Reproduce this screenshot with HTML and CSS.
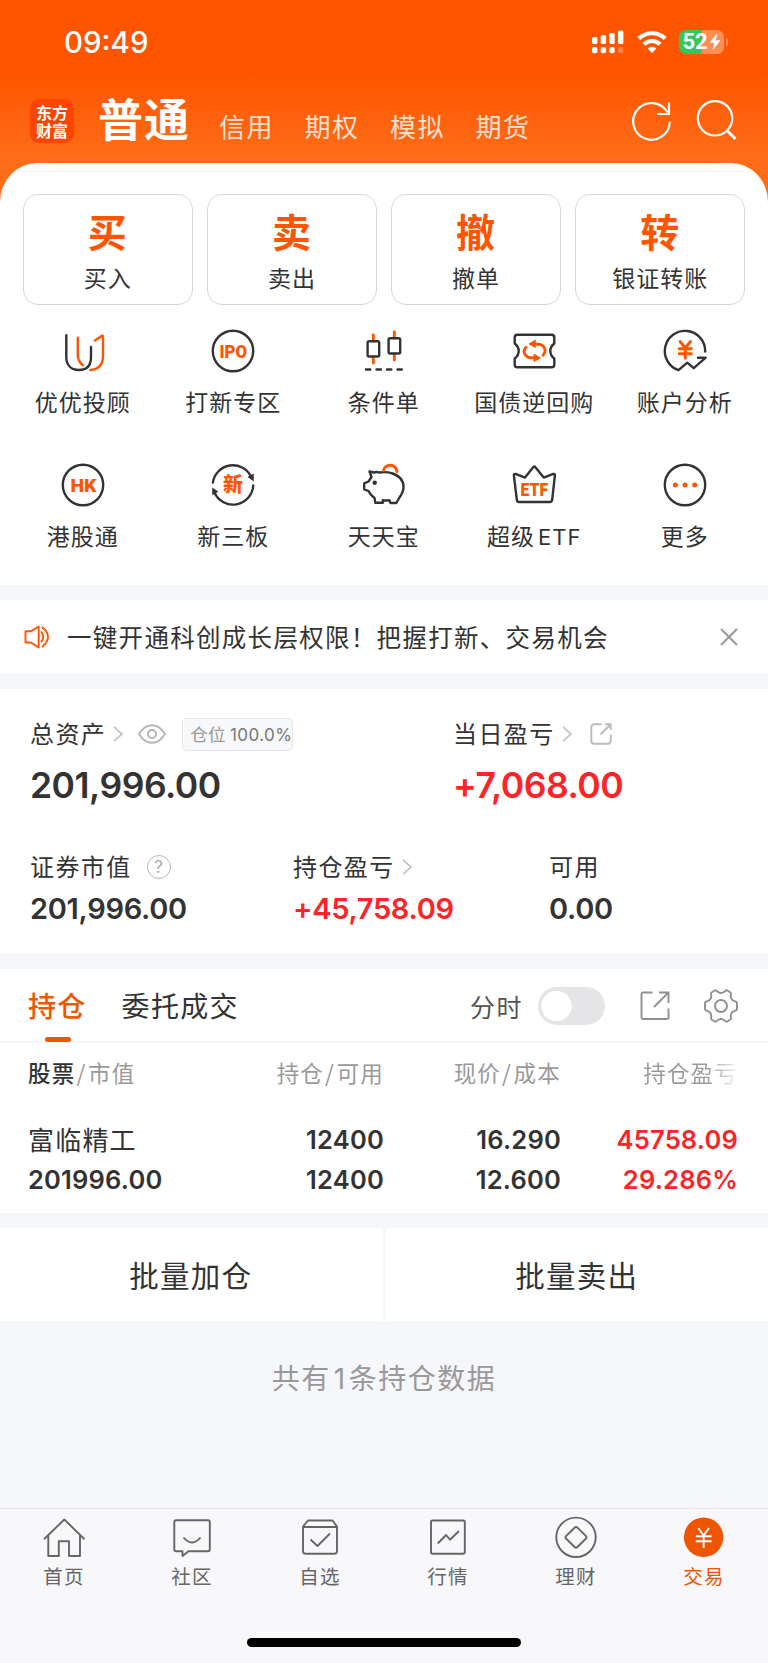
FILE: index.html
```html
<!DOCTYPE html>
<html lang="zh-CN">
<head>
<meta charset="utf-8">
<meta name="viewport" content="width=device-width, initial-scale=1">
<title>交易</title>
<link rel="stylesheet" href="styles.css">
</head>
<body>
<div class="app">
  <header class="hero">
    <div class="status">
      <span class="clock">09:49</span>
      <div class="status-icons">
        <svg class="signal" width="32" height="24" viewBox="0 0 32 24" fill="#fff">
          <rect x="0" y="7" width="5.4" height="7" rx="1.6"/><rect x="8.7" y="5" width="5.4" height="9" rx="1.6"/><rect x="17.3" y="3" width="5.4" height="11" rx="1.6"/><rect x="26" y="0.5" width="5.4" height="13.5" rx="1.6"/>
          <rect x="0" y="17" width="5.4" height="6.3" rx="1.8"/><rect x="8.7" y="17" width="5.4" height="6.3" rx="1.8"/><rect x="17.3" y="17" width="5.4" height="6.3" rx="1.8"/><rect x="26" y="17" width="5.4" height="6.3" rx="1.8" opacity=".25"/>
        </svg>
        <svg class="wifi" width="30" height="24" viewBox="0 0 30 24" fill="none" stroke="#fff" stroke-width="4.2">
          <path d="M1.8 8.6a19 19 0 0 1 26.4 0"/><path d="M6.9 14.3a11.6 11.6 0 0 1 16.2 0"/><path d="M15 23l-4.3-4.4a6.2 6.2 0 0 1 8.6 0z" fill="#fff" stroke="none"/>
        </svg>
        <div class="battery"><span>52</span><svg width="12" height="18" viewBox="0 0 12 18"><path d="M8.3 0L.6 9.7h4.6L3.6 17.4 11.5 7.3H6.9z" fill="#fff"/></svg></div>
        <i class="battery-tip"></i>
      </div>
    </div>
    <nav class="accounts">
      <div class="brand"><span>东方</span><span>财富</span></div>
      <b class="account-on">普通</b>
      <span class="account">信用</span><span class="account">期权</span><span class="account">模拟</span><span class="account">期货</span>
      <svg class="tool" width="44" height="44" viewBox="0 0 44 44" fill="none" stroke="#fff" stroke-width="2.2"><path d="M39.8 22.5A18.3 18.3 0 1 1 37.500 13.500"/><path d="M39 3.5V15H27"/></svg>
      <svg class="tool" width="44" height="44" viewBox="0 0 44 44" fill="none" stroke="#fff" stroke-width="2.2"><circle cx="20" cy="19.300" r="17.2"/><path d="M32 31.500l8.500 8.500" stroke-width="2.800"/></svg>
    </nav>
  </header>

  <main>
    <section class="sheet">
      <div class="cards">
        <div class="card"><b>买</b><span>买入</span></div>
        <div class="card"><b>卖</b><span>卖出</span></div>
        <div class="card"><b>撤</b><span>撤单</span></div>
        <div class="card"><b>转</b><span>银证转账</span></div>
      </div>
      <div class="grid">
        <div class="entry">
          <svg class="icon" viewBox="0 0 48 48"><path class="k" d="M7.3 8.3V30C7.3 38 12 43 20 43S32 38 32 30V20"/><path class="o" d="M18.8 10.7V28c0 5 1.600 7.500 5 10.300M36 13.500L43 8.800L44 9V29C44 38 39.500 42.300 31.300 43"/></svg>
          <span>优优投顾</span></div>
        <div class="entry">
          <svg class="icon" viewBox="0 0 48 48"><circle class="k" cx="24" cy="24" r="20.2"/><text class="glyph" x="10.500" y="30.500" font-size="18" textLength="27.500" lengthAdjust="spacingAndGlyphs">IPO</text></svg>
          <span>打新专区</span></div>
        <div class="entry">
          <svg class="icon" viewBox="0 0 48 48"><path class="o thick" d="M13.300 8V14M13.300 30V36M34.300 5V11M34.300 27V33"/><rect class="k" x="7.600" y="14.300" width="11.600" height="15.200" rx="1.500"/><rect class="k" x="28.600" y="11.300" width="11.600" height="15.200" rx="1.500"/><path class="k" d="M6 42.500h4.300M16.500 42.500h4.500M27 42.500h4.300M37.500 42.500h4.300"/></svg>
          <span>条件单</span></div>
        <div class="entry">
          <svg class="icon" viewBox="0 0 48 48"><path class="k" d="M7.300 7.700H41.700Q44.300 7.700 44.300 10.500V16.500Q40.300 19.500 40.300 24T44.300 31.500V37.500Q44.300 40.300 41.700 40.300H7.300Q4.700 40.300 4.700 37.500V31.500Q8.700 28.500 8.700 24T4.700 16.500V10.500Q4.700 7.700 7.300 7.700Z"/><path class="o thick" d="M25 17.200H27.500C35 17.200 37 24 33 28.300M16 20.300C11.500 25 16 30.800 21 30.800H24.500"/><path d="M19 16.900L25.300 13.300V20.500ZM30.300 30.900L24 27.200V34.600Z" fill="#ff5500" stroke="#ff5500" stroke-linejoin="round"/></svg>
          <span>国债逆回购</span></div>
        <div class="entry">
          <svg class="icon" viewBox="0 0 48 48"><path class="k" d="M44.200 24.500A20.200 20.200 0 1 0 17.500 43.200L26.300 35.700L32.700 41.200L44.700 30.700H37"/><path class="o thick" d="M19 14.500L24.300 21L29.500 14.500M24.300 21V31.200M18.200 21.800H30.400M18.200 26.700H30.400"/></svg>
          <span>账户分析</span></div>
        <div class="entry">
          <svg class="icon" viewBox="0 0 48 48"><circle class="k" cx="24" cy="24" r="20.2"/><text class="glyph" x="11.500" y="30.500" font-size="18.500" textLength="26" lengthAdjust="spacingAndGlyphs">HK</text></svg>
          <span>港股通</span></div>
        <div class="entry">
          <svg class="icon" viewBox="0 0 48 48"><path class="k" d="M3.900 21.500A20.200 20.200 0 0 1 42 15.500M44.200 24.500A20.200 20.200 0 0 1 5.500 31.500"/><path d="M40 16L44 13.700V19ZM8 30.700L4 33V28Z" fill="#333" stroke="#333" stroke-width="1.500"/><text class="glyph cn" x="14" y="31" font-size="20">新</text></svg>
          <span>新三板</span></div>
        <div class="entry">
          <svg class="icon" viewBox="0 0 48 48"><path class="k" d="M9.500 10.500L14 11.500Q17 10.500 19 11.500Q27 10.500 31 12Q43.500 15.500 43.500 26Q43.500 31 39.500 36.500L36.300 42H30.500L29.500 39.300Q26 39.700 22.800 39.300V41.700H15.300L14.500 37Q10 33.500 8.500 30L4.200 28.300V22.300L8.500 20.500L11.500 16Z"/><circle cx="14.700" cy="21.700" r="2.200" fill="#333"/><path class="o thick" d="M23.500 9.500C25 2.500 35.500 2 37 10.500"/></svg>
          <span>天天宝</span></div>
        <div class="entry">
          <svg class="icon" viewBox="0 0 48 48"><path class="k" d="M15 16.600L23.200 6.200Q24.300 4.800 25.400 6.200L33.700 16.600L43.300 12.900Q45.100 12.700 44.900 14.500L42.200 38.600Q41.900 41 39.700 41H9Q7 41 6.800 38.600L3.900 14.500Q3.700 12.700 5.500 12.900Z"/><text class="glyph" x="10.500" y="34.800" font-size="19" textLength="27.500" lengthAdjust="spacingAndGlyphs">ETF</text></svg>
          <span class="mixed">超级<em>ETF</em></span></div>
        <div class="entry">
          <svg class="icon" viewBox="0 0 48 48"><circle class="k" cx="24" cy="24" r="20.2"/><g fill="#ff5500"><circle cx="14.300" cy="24" r="2.500"/><circle cx="24" cy="24" r="2.500"/><circle cx="33.700" cy="24" r="2.500"/></g></svg>
          <span>更多</span></div>
      </div>
    </section>

    <section class="notice">
      <svg width="28" height="28" viewBox="0 0 28 28" fill="none" stroke="#ff5500" stroke-width="1.900" stroke-linejoin="round"><path d="M2.500 8.300H8L15.700 3.500V24.500L8 19.500H2.500Z"/><path d="M18 8.500Q22.500 13.800 18 19.200M19 4Q31 13.800 19 24"/></svg>
      <p>一键开通科创成长层权限！把握打新、交易机会</p>
      <svg class="close" width="18" height="18" viewBox="0 0 18 18" stroke="#999" stroke-width="2"><path d="M1 1L17 17M17 1L1 17"/></svg>
    </section>

    <section class="assets">
      <div class="row top">
        <div class="stat">
          <div class="label"><span>总资产</span><svg class="chev" viewBox="0 0 10 16"><path d="M1 .8L9 8L1 15.200"/></svg>
            <svg class="eye" width="28" height="20" viewBox="0 0 28 20" fill="none" stroke="#b5b5b5" stroke-width="1.900"><path d="M1 10Q6.500 1.200 14 1.200T27 10Q21.500 18.800 14 18.800T1 10Z"/><circle cx="14" cy="10" r="4"/></svg>
            <span class="badge"><em>仓位</em>100.0%</span></div>
          <div class="num big">201,996.00</div>
        </div>
        <div class="stat">
          <div class="label"><span>当日盈亏</span><svg class="chev" viewBox="0 0 10 16"><path d="M1 .8L9 8L1 15.200"/></svg>
            <svg class="share" width="22" height="22" viewBox="0 0 22 22" fill="none" stroke="#bbb" stroke-width="1.900"><path d="M11.500 1.300H4.300Q1.300 1.300 1.300 4.300V17.700Q1.300 20.700 4.300 20.700H17.700Q20.700 20.700 20.700 17.700V11.500M15 1.300H20.700V7M20.500 1.500L10.500 11.500"/></svg></div>
          <div class="num big up">+7,068.00</div>
        </div>
      </div>
      <div class="row bottom">
        <div class="stat">
          <div class="label"><span>证券市值</span><i class="help">?</i></div>
          <div class="num">201,996.00</div>
        </div>
        <div class="stat">
          <div class="label"><span>持仓盈亏</span><svg class="chev" viewBox="0 0 10 16"><path d="M1 .8L9 8L1 15.200"/></svg></div>
          <div class="num up">+45,758.09</div>
        </div>
        <div class="stat">
          <div class="label"><span>可用</span></div>
          <div class="num">0.00</div>
        </div>
      </div>
    </section>

    <section class="holdings">
      <div class="tabs">
        <span class="tab on">持仓</span><span class="tab">委托成交</span>
        <span class="mode">分时</span><i class="toggle"></i>
        <svg class="export" width="30" height="30" viewBox="0 0 30 30" fill="none" stroke="#8f8f8f" stroke-width="1.900"><path d="M12.500 1.500H3Q1.500 1.500 1.500 3V26.500Q1.500 28 3 28H27Q28.500 28 28.500 26.500V17.500M19 1.500H28.500V12M28.300 1.700L14 16"/></svg>
        <svg class="gear" width="36" height="36" viewBox="0 0 36 36" fill="none" stroke="#8f8f8f" stroke-width="1.900"><path d="M12.200 2.300Q13.300 2.200 14.300 3.500Q18 6.500 21.700 3.500Q22.700 2.200 23.800 2.300L27.500 4.500Q28.300 5.500 27.700 7Q27.500 12 31.700 13.200Q33.700 13.500 34 14.700V21.300Q33.700 22.500 31.700 22.800Q27.500 24 27.700 29Q28.300 30.500 27.500 31.500L23.800 33.700Q22.700 33.800 21.700 32.500Q18 29.500 14.300 32.500Q13.300 33.800 12.200 33.700L8.500 31.500Q7.700 30.500 8.300 29Q8.500 24 4.300 22.800Q2.300 22.500 2 21.300V14.700Q2.300 13.500 4.300 13.200Q8.500 12 8.300 7Q7.700 5.500 8.500 4.500Z" stroke-linejoin="round"/><circle cx="18" cy="18" r="6"/></svg>
      </div>
      <div class="cols head"><span><b>股票</b><u>/</u>市值</span><span>持仓<u>/</u>可用</span><span>现价<u>/</u>成本</span><span class="fade">持仓盈亏</span></div>
      <div class="cols line name"><span class="stock">富临精工</span><span>12400</span><span>16.290</span><span class="up">45758.09</span></div>
      <div class="cols line"><span>201996.00</span><span>12400</span><span>12.600</span><span class="up">29.286%</span></div>
    </section>

    <section class="batch"><span>批量加仓</span><span>批量卖出</span></section>
    <p class="total">共有<em>1</em>条持仓数据</p>
  </main>

  <footer class="tabbar">
    <div class="items">
      <div class="item"><svg viewBox="0 0 44 44"><path d="M2 23.200L22.300 3.500L42.500 23.200M6.300 19.500V40H16.800V25.300H27V40H38V19.500"/></svg><span>首页</span></div>
      <div class="item"><svg viewBox="0 0 44 44"><path d="M6 4.300H38Q39.800 4.300 39.800 6V33.500Q39.800 35.200 38 35.200H18.500L12.500 40V35.200H6Q4.300 35.200 4.300 33.500V6Q4.300 4.300 6 4.300ZM13.500 21.500Q22 31.500 30.500 21.500"/></svg><span>社区</span></div>
      <div class="item"><svg viewBox="0 0 44 44"><path d="M10 4.500H34.500L39 10.500V35Q39 37.700 36.500 37.700H7.500Q5 37.700 5 35V10.500ZM5.500 11H38.500M12.500 23.500L19.500 30L32 17.500"/></svg><span>自选</span></div>
      <div class="item"><svg viewBox="0 0 44 44"><path d="M6.500 4.500H37Q38.800 4.500 38.800 6V36Q38.800 37.700 37 37.700H6.500Q5 37.700 5 36V6Q5 4.500 6.500 4.500ZM11.800 27.500L20 19L24 23.700L33 15"/></svg><span>行情</span></div>
      <div class="item"><svg viewBox="0 0 44 44"><circle cx="22" cy="21.300" r="19.700"/><path d="M20.600 11.700Q22 10.300 23.400 11.700L32 20.100Q33.200 21.300 32 22.500L23.400 31Q22 32.300 20.600 31L12 22.500Q10.800 21.300 12 20.100Z"/></svg><span>理财</span></div>
      <div class="item on"><svg viewBox="0 0 44 44"><circle cx="21.600" cy="21.300" r="19.700" fill="#ef5400" stroke="none"/><path stroke="#fff" d="M16.300 12L21.600 19.500L27 12M21.600 19.500V32M13.800 20.300H29.500M13.800 25.200H29.500"/></svg><span>交易</span></div>
    </div>
    <i class="home-bar"></i>
  </footer>
</div>
</body>
</html>
```

FILE: styles.css
```css
* { box-sizing: border-box; }
body { margin: 0; background: #f6f7fa; color: #333; font-family: Inter, "Noto Sans CJK SC", sans-serif; }
p { margin: 0; }
i, em { font-style: normal; }
u { text-decoration: none; }
svg { display: block; flex: none; }
.app { width: 768px; height: 1663px; display: flex; flex-direction: column; overflow: hidden; white-space: nowrap; }

/* header */
.hero { height: 203px; flex: none; background: linear-gradient(#ff5500 0, #ff5500 72px, #ff6c17 155px, #ff6c17 100%); color: #fff; }
.status { height: 84px; display: flex; align-items: center; justify-content: space-between; padding: 0 44px 0 64px; }
.clock { font-size: 29.500px; font-weight: 500; line-height: 36px; letter-spacing: 0; }
.status-icons { display: flex; align-items: center; }
.signal { margin-right: 13px; }
.wifi { margin-right: 12px; }
.battery { width: 45px; height: 24px; border-radius: 7px; background: linear-gradient(90deg, #34c759 23px, #ff8d55 23px); display: flex; align-items: center; justify-content: center; gap: 1px; font: 700 22px/24px Roboto, sans-serif; margin-right: 2px; }
.battery-tip { width: 2px; height: 8px; margin-right: -4px; border-radius: 0 2px 2px 0; background: #ff8d55; }
.accounts { height: 79px; display: flex; align-items: flex-start; padding: 15px 0 0 30px; }
.brand { width: 44px; height: 44px; border-radius: 9px; background: #ff4400; display: flex; flex-direction: column; align-items: center; justify-content: center; font: 700 16px/18px "Noto Sans CJK SC", sans-serif; }
.account-on { font: 700 45px/60px "Noto Sans CJK SC", sans-serif; letter-spacing: 1px; margin: -11px 0 0 24px; width: 121px; }
.account { font: 400 26px/36px "Noto Sans CJK SC", sans-serif; letter-spacing: 1.500px; color: rgba(255, 255, 255, .82); width: 85.500px; margin-top: 9px; }
.tool { margin: 0 0 0 2px; }
.tool:last-child { margin-left: 21px; }
.account + .tool { margin-left: 69px; }

/* sheet */
.sheet { height: 422px; margin-top: -40px; padding: 31px 22.500px 0; background: linear-gradient(#fff 8px, #f3f3f3 8px, #f3f3f3 9px, #fff 9px); border-radius: 37px 37px 0 0 / 39px 39px 0 0; }
main { flex: none; }
.cards { display: grid; grid-template-columns: repeat(4, 170.500px); justify-content: space-between; }
.card { height: 111px; border: 1px solid #d8d8d8; border-radius: 15px; display: flex; flex-direction: column; align-items: center; font-family: "Noto Sans CJK SC", sans-serif; }
.card b { font-size: 39px; line-height: 50px; height: 50px; margin: 10px 1px 0 0; color: #ff5500; font-weight: 700; }
.card span { font-size: 23px; line-height: 32px; margin-top: 6px; letter-spacing: 1px; }
.grid { display: grid; grid-template-columns: repeat(5, 150.500px); grid-auto-rows: 134px; margin: 22px -15px 0; }
.entry { display: flex; flex-direction: column; align-items: center; font-family: "Noto Sans CJK SC", sans-serif; font-size: 23px; letter-spacing: 1px; }
.entry span { line-height: 32px; margin: 10px 0 0 0; }
.mixed em { font: 400 22px Inter, sans-serif; letter-spacing: 1px; margin-left: 3px; }
.icon { width: 48px; height: 48px; }
.k, .o { fill: none; stroke: #333; stroke-width: 2.400; stroke-linecap: round; stroke-linejoin: round; }
.o { stroke: #ff5500; }
.thick { stroke-width: 2.900; }
.glyph { fill: #ff5500; font-family: Roboto, sans-serif; font-weight: 900; letter-spacing: 0; }
.glyph.cn { font-family: "Noto Sans CJK SC", sans-serif; }

/* notice */
.notice { height: 74px; margin: 15px 0; background: #fff; display: flex; align-items: center; padding: 0 30px 0 23px; }
.notice p { font: 400 24.500px/36px "Noto Sans CJK SC", sans-serif; letter-spacing: 1.300px; margin-left: 16px; }
.close { margin-left: auto; }

/* assets */
.assets { height: 265px; background: #fff; padding: 27px 30px 0; }
.row { display: grid; }
.top { grid-template-columns: 423px 1fr; height: 133px; }
.bottom { grid-template-columns: 263px 256px 1fr; }
.label { display: flex; align-items: center; height: 36px; font: 400 24px/34px "Noto Sans CJK SC", sans-serif; letter-spacing: 1.400px; }
.label > span:first-child { margin-top: -2px; }
.chev { width: 10px; height: 16px; fill: none; stroke: #c4c4c4; stroke-width: 1.800; margin-left: 7px; }
.eye { margin-left: 15px; }
.share { margin-left: 18px; }
.badge { margin-left: 16px; width: 111px; height: 33px; border: 1px solid #e6e6ea; border-radius: 5px; background: #f7f8fa; padding-left: 7px; font: 400 17px/29px Inter, sans-serif; color: #777; letter-spacing: .4px; }
.badge em { font-family: "Noto Sans CJK SC", sans-serif; font-size: 17.500px; letter-spacing: .4px; color: #999; margin-right: 4px; }
.help { width: 24px; height: 24px; margin-left: 15px; border: 1.500px solid #b8b8b8; border-radius: 50%; font: 400 17px/22px Inter, sans-serif; text-align: center; letter-spacing: 0; color: #aaa; }
.num { font-weight: 600; font-size: 29px; line-height: 36px; margin-top: 6px; letter-spacing: -.3px; }
.num.big { font-size: 35.500px; line-height: 44px; margin-top: 12px; letter-spacing: -.5px; }
.up { color: #ff2226; }

/* holdings */
.holdings { height: 244px; margin-top: 15px; background: #fff; }
.tabs { height: 74px; display: flex; align-items: center; padding: 0 29px 0 28px; border-bottom: 2px solid #f6f6f8; font-family: "Noto Sans CJK SC", sans-serif; }
.tab { font-size: 28px; line-height: 74px; letter-spacing: 1.300px; margin-right: 35px; }
.tab.on { position: relative; color: #f25500; font-weight: 500; }
.tab.on::after { content: ""; position: absolute; left: 17px; bottom: 0; width: 26px; height: 5px; border-radius: 2.500px; background: #f25500; }
.mode { margin-left: auto; font-size: 25px; letter-spacing: 1.500px; color: #555; line-height: 36px; margin-top: 1px; }
.toggle { width: 67px; height: 38px; border-radius: 19px; margin: 1px 0 0 15px; background: radial-gradient(circle at 18.500px 19px, #fff 14.800px, #e5e5e7 15.500px); }
.export { margin: 1px 0 0 35px; }
.gear { margin: 1px 0 0 33px; }
.cols { display: grid; grid-template-columns: 187px 169px 177px 177px; padding-left: 28px; }
.cols > span { text-align: right; }
.cols > span:first-child { text-align: left; }
.head { font: 400 22.500px/34px "Noto Sans CJK SC", sans-serif; letter-spacing: 1.200px; color: #999; margin-top: 12px; }
.head u { margin: 0 1.500px 0 1px; }
.head b { font-weight: 500; color: #333; }
.head .fade { background: linear-gradient(90deg, #999 82%, #fff 102%); -webkit-background-clip: text; background-clip: text; color: transparent; }
.line { font-weight: 600; font-size: 25.500px; line-height: 40px; letter-spacing: .2px; }
.name { margin-top: 31px; }
.stock { font: 400 26px/38px "Noto Sans CJK SC", sans-serif; letter-spacing: 1.200px; }

.batch { height: 93px; margin-top: 15px; display: grid; grid-template-columns: 1fr 1fr; gap: 3px; font: 400 29.500px/93px "Noto Sans CJK SC", sans-serif; letter-spacing: 1.200px; text-align: center; }
.batch span { background: #fff; }
.batch span:first-child { padding-right: 1px; }
.total { text-align: center; font-family: "Noto Sans CJK SC", sans-serif; font-size: 28px; line-height: 40px; letter-spacing: 1.500px; color: #999; margin-top: 36px; }
.total em { font-family: Inter, sans-serif; margin: 0 2px 0 3px; }

/* bottom bar */
.tabbar { margin-top: auto; height: 155px; flex: none; background: #f8f8fb; border-top: 1px solid #e6e6e9; display: flex; flex-direction: column; align-items: center; }
.items { display: grid; grid-template-columns: repeat(6, 128px); padding-top: 7px; }
.item { display: flex; flex-direction: column; align-items: center; color: #666; font: 400 19.500px/28px "Noto Sans CJK SC", sans-serif; letter-spacing: 1.200px; }
.item svg { width: 44px; height: 44px; fill: none; stroke: #666; stroke-width: 1.900; stroke-linejoin: round; }
.item span { margin-top: 2px; }
.item.on { color: #ef5400; }
.home-bar { width: 274px; height: 9px; border-radius: 5px; background: #000; margin-top: auto; margin-bottom: 16px; }
```
